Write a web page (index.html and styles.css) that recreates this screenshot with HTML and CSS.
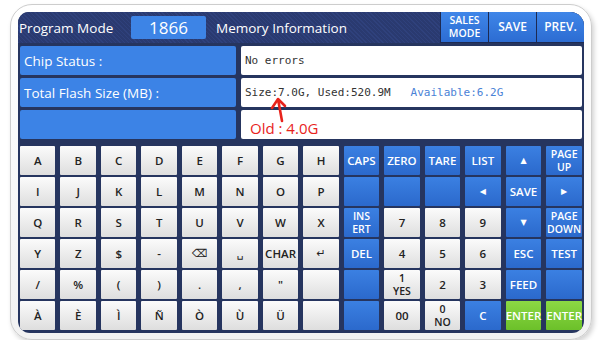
FILE: index.html
```html
<!DOCTYPE html>
<html lang="en">

<head>
    <meta charset="UTF-8">
    <meta name="viewport" content="width=device-width, initial-scale=1.0">
    <title>Memory Information</title>
    <link rel="stylesheet" href="styles.css">
</head>

<body>
    <div class="frame">
        <div class="panel">
            <div class="topbar">
                <span class="mode">Program Mode</span>
                <span class="code">1866</span>
                <span class="title">Memory Information</span>
                <div class="top-buttons">
                    <div class="top-btn small">SALES<br>MODE</div>
                    <div class="top-btn">SAVE</div>
                    <div class="top-btn">PREV.</div>
                </div>
            </div>

            <div class="info">
                <div class="info-row">
                    <div class="label">Chip Status :</div>
                    <div class="value mono">No errors</div>
                </div>
                <div class="info-row">
                    <div class="label">Total Flash Size (MB) :</div>
                    <div class="value mono">Size:7.0G, Used:520.9M   <span class="avail">Available:6.2G</span></div>
                </div>
                <div class="info-row">
                    <div class="label"></div>
                    <div class="value old">Old : 4.0G</div>
                </div>
                <svg class="arrow" width="22" height="28" viewBox="0 0 22 28">
                    <path d="M10 3 L14 25 M4 12 L10 3 L17 10" fill="none" stroke="#e8231c" stroke-width="2.6" stroke-linecap="round" stroke-linejoin="round"/>
                </svg>
            </div>

            <div class="keys">
                <!-- row 1 -->
                <div class="key">A</div>
                <div class="key">B</div>
                <div class="key">C</div>
                <div class="key">D</div>
                <div class="key">E</div>
                <div class="key">F</div>
                <div class="key">G</div>
                <div class="key">H</div>
                <div class="key blue">CAPS</div>
                <div class="key blue">ZERO</div>
                <div class="key blue">TARE</div>
                <div class="key blue">LIST</div>
                <div class="key blue glyph">&#9650;</div>
                <div class="key blue two">PAGE<br>UP</div>
                <!-- row 2 -->
                <div class="key">I</div>
                <div class="key">J</div>
                <div class="key">K</div>
                <div class="key">L</div>
                <div class="key">M</div>
                <div class="key">N</div>
                <div class="key">O</div>
                <div class="key">P</div>
                <div class="key blue"></div>
                <div class="key blue"></div>
                <div class="key blue"></div>
                <div class="key blue glyph">&#9664;</div>
                <div class="key blue">SAVE</div>
                <div class="key blue glyph">&#9654;</div>
                <!-- row 3 -->
                <div class="key">Q</div>
                <div class="key">R</div>
                <div class="key">S</div>
                <div class="key">T</div>
                <div class="key">U</div>
                <div class="key">V</div>
                <div class="key">W</div>
                <div class="key">X</div>
                <div class="key blue two">INS<br>ERT</div>
                <div class="key">7</div>
                <div class="key">8</div>
                <div class="key">9</div>
                <div class="key blue glyph">&#9660;</div>
                <div class="key blue two">PAGE<br>DOWN</div>
                <!-- row 4 -->
                <div class="key">Y</div>
                <div class="key">Z</div>
                <div class="key">$</div>
                <div class="key">-</div>
                <div class="key sym">&#9003;</div>
                <div class="key sym">&#9251;</div>
                <div class="key">CHAR</div>
                <div class="key sym">&#8629;</div>
                <div class="key blue">DEL</div>
                <div class="key">4</div>
                <div class="key">5</div>
                <div class="key">6</div>
                <div class="key blue">ESC</div>
                <div class="key blue">TEST</div>
                <!-- row 5 -->
                <div class="key">/</div>
                <div class="key">%</div>
                <div class="key">(</div>
                <div class="key">)</div>
                <div class="key">.</div>
                <div class="key">,</div>
                <div class="key">"</div>
                <div class="key"></div>
                <div class="key blue"></div>
                <div class="key two">1<br>YES</div>
                <div class="key">2</div>
                <div class="key">3</div>
                <div class="key blue">FEED</div>
                <div class="key blue"></div>
                <!-- row 6 -->
                <div class="key">&Agrave;</div>
                <div class="key">&Egrave;</div>
                <div class="key">&Igrave;</div>
                <div class="key">&Ntilde;</div>
                <div class="key">&Ograve;</div>
                <div class="key">&Ugrave;</div>
                <div class="key">&Uuml;</div>
                <div class="key"></div>
                <div class="key blue"></div>
                <div class="key">00</div>
                <div class="key two">0<br>NO</div>
                <div class="key blue">C</div>
                <div class="key green">ENTER</div>
                <div class="key green">ENTER</div>
            </div>
        </div>
    </div>
</body>
</html>
```

FILE: styles.css
```css
body {
    margin: 0;
    background-color: #ffffff;
    font-family: "Open Sans", "Noto Sans", sans-serif;
}

.frame {
    box-sizing: border-box;
    width: 582px;
    height: 336px;
    margin: 4px 0 0 10px;
    padding: 7px 7px 6px 7px;
    border: 1px solid #cdcdcd;
    border-radius: 22px;
    background: linear-gradient(#ffffff, #f2f2f2);
    box-shadow: 2px 3px 5px rgba(0, 0, 0, 0.18);
}

.panel {
    height: 100%;
    display: flex;
    flex-direction: column;
    background-color: #26355f;
    border-radius: 11px 14px 12px 12px;
    overflow: hidden;
}

/* top bar */
.topbar {
    height: 31px;
    display: flex;
    align-items: center;
    color: #ffffff;
    background: repeating-linear-gradient(45deg, #2f417c 0 1px, #2a3a70 1px 3px);
}

.mode {
    width: 112px;
    padding-left: 1px;
    font-size: 13.5px;
}

.code {
    width: 75px;
    height: 23px;
    line-height: 23px;
    text-align: center;
    font-size: 17px;
    background-color: #3d84e6;
    border-radius: 2px;
}

.title {
    margin-left: 10px;
    font-size: 13.5px;
}

.top-buttons {
    margin-left: auto;
    align-self: stretch;
    display: flex;
}

.top-btn {
    width: 47px;
    display: flex;
    align-items: center;
    justify-content: center;
    text-align: center;
    font-size: 12px;
    font-weight: 600;
    line-height: 12px;
    border-left: 1px solid #1d2a52;
    border-bottom: 1px solid #1d2a52;
    background: linear-gradient(#3f86e8, #2c6cd2);
}

.top-btn.small {
    font-size: 10.5px;
    line-height: 13px;
}

/* info rows */
.info {
    position: relative;
    display: flex;
    flex-direction: column;
    gap: 3px;
    padding: 3px 2px 0 2px;
}

.info-row {
    height: 29px;
    display: flex;
    gap: 5px;
}

.label {
    width: 212px;
    padding-left: 4px;
    display: flex;
    align-items: center;
    color: #ffffff;
    font-size: 13.5px;
    background-color: #3c83e6;
    border-radius: 2px;
}

.value {
    flex: 1;
    display: flex;
    align-items: center;
    padding-left: 4px;
    background-color: #ffffff;
    border-radius: 2px;
}

.mono {
    font-family: "DejaVu Sans Mono", monospace;
    font-size: 11px;
    color: #333333;
    white-space: pre;
}

.avail {
    color: #4a82d6;
}

.old {
    padding-left: 9px;
    padding-top: 6px;
    color: #e8231c;
    font-size: 15px;
}

.arrow {
    position: absolute;
    left: 250px;
    top: 53px;
}

/* keyboard */
.keys {
    display: grid;
    grid-template-columns: repeat(14, 1fr);
    grid-auto-rows: 29px;
    column-gap: 5px;
    row-gap: 2px;
    padding: 7px 2px 0 2px;
}

.key {
    display: flex;
    align-items: center;
    justify-content: center;
    text-align: center;
    font-size: 11.5px;
    font-weight: 600;
    color: #222222;
    border-radius: 1px;
    background: linear-gradient(#fbfbfb, #dedede);
}

.key.two {
    line-height: 13px;
    font-size: 10.5px;
}

.key.sym {
    font-family: "DejaVu Sans", sans-serif;
    font-weight: normal;
    font-size: 11px;
}

.key.blue {
    color: #ffffff;
    background: linear-gradient(#3b80e2, #2b69cc);
}

.key.glyph {
    font-family: "DejaVu Sans", sans-serif;
    font-size: 8px;
}

.key.green {
    color: #ffffff;
    background: linear-gradient(#8cd944, #6cc02a);
}
```
